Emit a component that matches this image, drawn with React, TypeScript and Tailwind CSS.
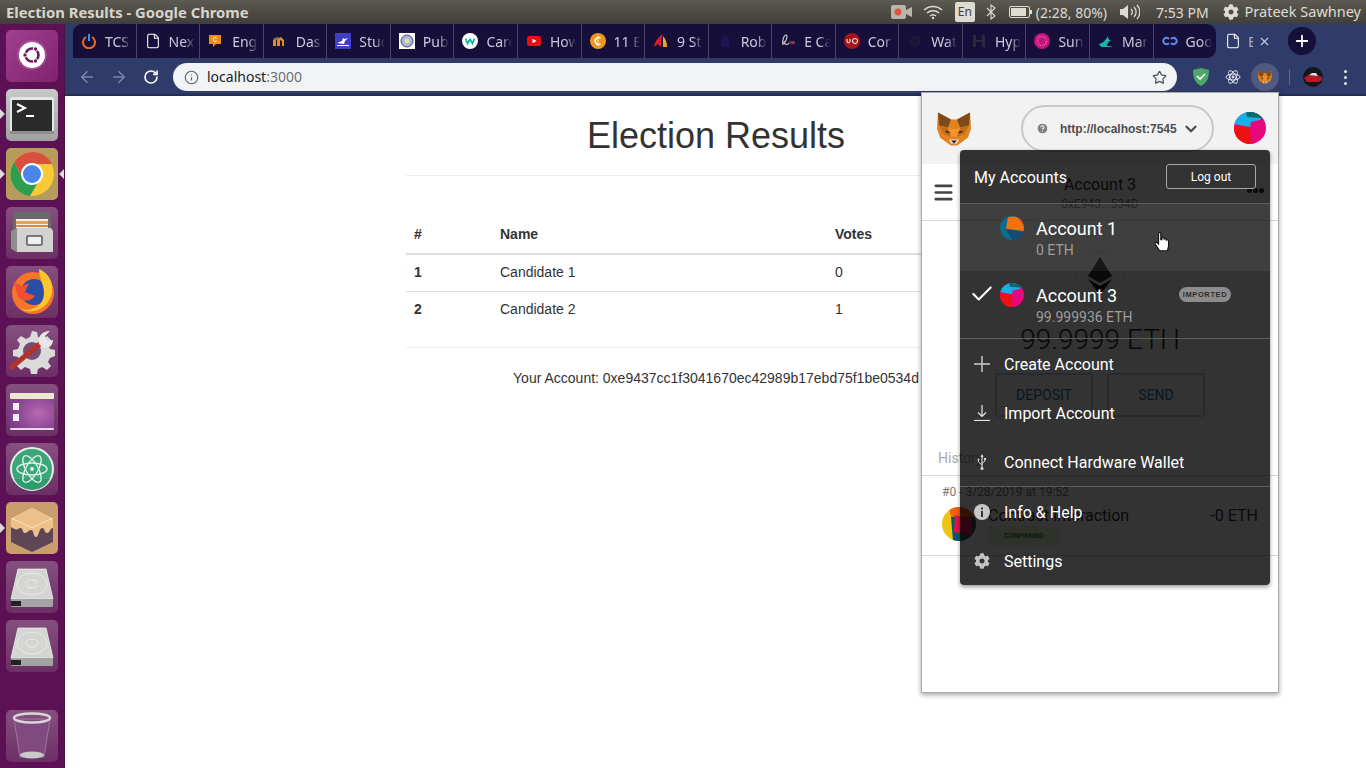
import React from 'react'
import { ArrowLeft, ArrowRight, RotateCw, Info, Star, Plus, X, File, ChevronDown, Check, Menu, CircleHelp } from 'lucide-react'
import { FaCog } from 'react-icons/fa'

const Tile = ({ bg, children }: { bg: string; children: React.ReactNode }) => (
  <div className={`w-[52px] h-[52px] rounded-[5px] shrink-0 ${bg}`}>
    <svg viewBox="0 0 52 52" width="52" height="52">{children}</svg>
  </div>
)

const purpleTile = 'bg-gradient-to-b from-[#85507f] to-[#6c2f65]'

const Disk = () => (
  <>
    <path d="M12 8h28l7 30v6a2 2 0 0 1-2 2H7a2 2 0 0 1-2-2v-6z" fill="#bdbdbd" />
    <path d="M12 8h28l7 30H5z" fill="#d4d4d2" stroke="#f2f2f2" strokeWidth="0.7" />
    <ellipse cx="26" cy="23" rx="15" ry="11" fill="none" stroke="#efefef" strokeWidth="0.8" />
    <ellipse cx="26" cy="23" rx="6" ry="4" fill="none" stroke="#f2f2f2" strokeWidth="0.8" />
    <path d="M5 38h42v6a2 2 0 0 1-2 2H7a2 2 0 0 1-2-2z" fill="#a3a3a3" />
    <rect x="5" y="40" width="10" height="5" fill="#222" />
  </>
)

const Arrow = ({ cls }: { cls: string }) => <div className={`absolute w-0 h-0 border-y-[5px] border-y-transparent ${cls}`} />

const Launcher = () => (
  <div className="relative w-[65px] shrink-0 bg-[#5c1154] border-r border-[#4a0f44] flex flex-col items-center gap-[7px] pt-[6px] pb-[6px]">
    <Tile bg="bg-gradient-to-br from-[#a0408f] to-[#80226f]">
      <circle cx="26" cy="25" r="15" fill="#b565a8" opacity="0.5" />
      <circle cx="26" cy="25" r="13" fill="#fff" />
      <circle cx="26" cy="25" r="6.500" fill="none" stroke="#6d1a60" strokeWidth="2.6" />
      <circle cx="19" cy="25" r="2.2" fill="#6d1a60" stroke="#fff" />
      <circle cx="29.500" cy="19" r="2.2" fill="#6d1a60" stroke="#fff" />
      <circle cx="29.500" cy="31" r="2.2" fill="#6d1a60" stroke="#fff" />
    </Tile>
    <Tile bg="bg-gradient-to-b from-[#c8c8c8] to-[#a2a2a2]">
      <rect x="4" y="8" width="44" height="37" rx="1.500" fill="#e6e6e6" />
      <rect x="6" y="11" width="40" height="31" fill="#2b2b2b" />
      <path d="M11 15l8 4-8 4" fill="none" stroke="#fff" strokeWidth="2" />
      <path d="M20 27h8" stroke="#fff" strokeWidth="2" />
      <rect x="4" y="42" width="44" height="3" fill="#8e8e8e" />
    </Tile>
    <Tile bg="bg-[#b59c5a]">
      <circle cx="26" cy="26" r="22" fill="#fbc935" />
      <path d="M26 16h20a22 22 0 0 0-38-2l9 17z" fill="#d9503f" />
      <path d="M8 14a22 22 0 0 0 16 34l10-17H17z" fill="#2e9d4f" />
      <circle cx="26" cy="26" r="11" fill="#fff" />
      <circle cx="26" cy="26" r="9" fill="#4a86e8" />
    </Tile>
    <Tile bg={purpleTile}>
      <path d="M9 5h34l2 8v11H7V13z" fill="#6a6a6a" />
      <path d="M10 12h32v12H10z" fill="#f4f0e6" />
      <path d="M10 14h32v3H10z" fill="#e8a05c" />
      <path d="M10 18h32v2H10z" fill="#d98a4a" />
      <path d="M11 21h34l2 3v21H11z" fill="#d2d2d2" />
      <path d="M5 24l6-3v24l-6-3z" fill="#8e8e8e" />
      <rect x="21" y="29" width="15" height="9" rx="1" fill="#f0f0f0" stroke="#555" strokeWidth="1.500" />
    </Tile>
    <Tile bg={purpleTile}>
      <circle cx="27" cy="27" r="21" fill="#f7742b" />
      <circle cx="28" cy="26" r="13" fill="#2a4ea8" />
      <path d="M33 3c14 6 17 22 9 33-6 9-19 12-28 7 13 3 24-4 24-16 0-9-5-14-5-24z" fill="#fcc72e" />
      <path d="M8 16l8 4 7-3-4 9 10 4c-4 6-12 6-17 1z" fill="#f04f32" />
    </Tile>
    <Tile bg={purpleTile}>
      <path d="M26 6l5 1 1 5 5 2 4-3 4 4-3 5 2 4 5 1v6l-5 2-2 4 3 4-4 4-5-3-4 2-1 5h-6l-1-5-5-2-4 3-4-4 3-5-2-4-5-1v-6l5-1 2-5-3-4 4-4 5 3 4-2z" fill="#dadada" />
      <circle cx="26" cy="26" r="9" fill="#7a4a74" />
      <path d="M6 42L36 17" stroke="#b3322a" strokeWidth="5" strokeLinecap="round" />
      <path d="M33 19c-2-6 2-13 11-13l-5 5 2 5 6-1c0 7-7 11-14 4z" fill="#e8e8e8" />
    </Tile>
    <Tile bg={purpleTile}>
      <defs>
        <radialGradient id="winGlow" cx="0.65" cy="0.55" r="0.6">
          <stop offset="0" stopColor="#b868b4" />
          <stop offset="1" stopColor="#7f3f8c" />
        </radialGradient>
      </defs>
      <rect x="4" y="9" width="44" height="37" rx="2" fill="url(#winGlow)" />
      <rect x="4" y="9" width="44" height="6" rx="1" fill="#ece9cf" />
      <rect x="7" y="19" width="6" height="7" fill="#f1f1f1" />
      <rect x="7" y="30" width="6" height="7" fill="#f1f1f1" />
      <rect x="4" y="44" width="44" height="2" rx="1" fill="#e8d8ea" />
    </Tile>
    <Tile bg={purpleTile}>
      <circle cx="26" cy="26" r="21" fill="#3ba67a" stroke="#e4efe9" strokeWidth="2" />
      <path d="M26 47a21 21 0 0 0 18-11H8a21 21 0 0 0 18 11z" fill="#2f9c6e" />
      <g fill="none" stroke="#dff2e8" strokeWidth="1.400">
        <ellipse cx="26" cy="26" rx="15" ry="6" />
        <ellipse cx="26" cy="26" rx="15" ry="6" transform="rotate(60 26 26)" />
        <ellipse cx="26" cy="26" rx="15" ry="6" transform="rotate(120 26 26)" />
      </g>
      <circle cx="26" cy="26" r="2" fill="#dff2e8" />
    </Tile>
    <Tile bg="bg-[#c99d6c]">
      <path d="M26 5l21 11v24L26 50 5 40V16z" fill="#5f4657" />
      <path d="M26 5l21 11v10c-3 0-3 5-6 5s-2-5-5-5-3 9-6 9-2-7-5-7-3 3-6 3-2-6-5-5-3 3-9-1V16z" fill="#edc08a" />
      <path d="M5 16l21 10 21-10" fill="none" stroke="#fbe6c9" strokeWidth="0.9" />
    </Tile>
    <Tile bg={purpleTile}><Disk /></Tile>
    <Tile bg={purpleTile}><Disk /></Tile>
    <div className="mt-auto">
      <Tile bg={purpleTile}>
        <path d="M8 9l6 38h24l6-38z" fill="#7f4a7f" stroke="#a283a4" strokeWidth="0.8" />
        <ellipse cx="26" cy="45" rx="12" ry="3.500" fill="#c9c9c9" />
        <ellipse cx="26" cy="8" rx="18" ry="4.500" fill="none" stroke="#d7d7d7" strokeWidth="2.500" />
      </Tile>
    </div>
    <Arrow cls="left-0 top-[85px] border-l-[5px] border-l-[#dcdcdc]" />
    <Arrow cls="left-0 top-[145px] border-l-[5px] border-l-[#dcdcdc]" />
    <Arrow cls="right-0 top-[145px] border-r-[5px] border-r-[#dcdcdc]" />
    <Arrow cls="left-0 top-[499px] border-l-[5px] border-l-[#dcdcdc]" />
  </div>
)

const Ico = ({ children }: { children: React.ReactNode }) => (
  <svg viewBox="0 0 16 16" width="16" height="16" className="shrink-0">{children}</svg>
)

const tabs: { title: string; icon: React.ReactNode }[] = [
  { title: 'TCS', icon: <Ico><path d="M5 4a6 6 0 1 0 6 0" fill="none" stroke="#ef6c1a" strokeWidth="2" /><path d="M8 1v7" stroke="#2196f3" strokeWidth="2" /></Ico> },
  { title: 'Next', icon: <File size={16} color="#fff" strokeWidth={1.6} className="shrink-0" /> },
  { title: 'Engl', icon: <Ico><rect x="1" y="2" width="12" height="9" fill="#f28b20" /><path d="M5 11v3l3-3z" fill="#f28b20" /><path d="M8.500 5a2 2 0 1 0 0 3" fill="none" stroke="#fff" /></Ico> },
  { title: 'Dash', icon: <Ico><path d="M1 13V7l3-2v8zM5 13V6l4-2 3 3v6h-2V8l-2-1v6z" fill="#e78b1f" /><path d="M1 6l4-2 3 1-4 2z" fill="#777" /></Ico> },
  { title: 'Stud', icon: <Ico><rect width="16" height="16" fill="#3f3fc0" /><path d="M2 10l5-2 1-3 2 1 3-1-3 3-1 3zM2 12h12v1H2z" fill="#fff" /></Ico> },
  { title: 'Publ', icon: <Ico><rect width="16" height="16" fill="#fff" /><circle cx="8" cy="8" r="6" fill="#aab4d0" stroke="#3d4f85" /><circle cx="8" cy="8" r="2.500" fill="#e7d9a8" /></Ico> },
  { title: 'Care', icon: <Ico><circle cx="8" cy="8" r="8" fill="#fff" /><path d="M3.500 5.500l2 5 2.500-4 2.500 4 2-5" fill="none" stroke="#12b5a5" strokeWidth="1.800" /></Ico> },
  { title: 'How', icon: <Ico><rect x="1" y="3" width="14" height="10" rx="2.500" fill="#e81010" /><path d="M6.500 5.800v4.400L10.500 8z" fill="#fff" /></Ico> },
  { title: '11 B', icon: <Ico><circle cx="8" cy="8" r="8" fill="#f0961e" /><path d="M10.500 5a3.500 3.500 0 1 0 0 6" fill="none" stroke="#fff" strokeWidth="1.400" /><path d="M8 3v10" stroke="#fff" strokeWidth="0.8" /></Ico> },
  { title: '9 St', icon: <Ico><path d="M1 14C2 8 6 3 10 1 8 6 8 10 8 14l-3-3z" fill="#d81f26" /><path d="M10 3c3 3 4 7 4 11h-4z" fill="#f2a71b" /></Ico> },
  { title: 'Rob', icon: <Ico><path d="M4 14V6a4 4 0 0 1 8 0v8z" fill="#1d1450" /></Ico> },
  { title: 'E Ca', icon: <Ico><path d="M3 12c-1-5 1-10 3-10s1 5-2 8c2 2 4 2 5 0" fill="none" stroke="#ccc" strokeWidth="1.200" /><rect x="9" y="8" width="6" height="3" fill="#444" /><circle cx="13" cy="10" r="1.200" fill="#d81b3c" /></Ico> },
  { title: 'Cor', icon: <Ico><circle cx="8" cy="8" r="8" fill="#a4161a" /><path d="M3 6v3a2 2 0 0 0 3 0V6" fill="none" stroke="#fff" /><circle cx="11" cy="8" r="2.500" fill="none" stroke="#fff" /></Ico> },
  { title: 'Wat', icon: <Ico><circle cx="8" cy="8" r="4" fill="#1b1330" stroke="#231a40" strokeWidth="3" strokeDasharray="2 1" /></Ico> },
  { title: 'Hyp', icon: <Ico><path d="M2 2h3v5h6V2h3v12h-3V9H5v5H2z" fill="#2a2a3a" /></Ico> },
  { title: 'Sun', icon: <Ico><circle cx="8" cy="8" r="8" fill="#c2127d" /><circle cx="8" cy="8" r="4.500" fill="none" stroke="#e85fae" strokeDasharray="1 1" strokeWidth="2" /></Ico> },
  { title: 'Man', icon: <Ico><path d="M1 11c4-1 7-4 9-8 0 3 1 4 3 5-2 0-4 2-4 5 2 0 4 0 6 1H4c-1 0-2-1-3-3z" fill="#1bb5a6" /></Ico> },
  { title: 'Goo', icon: <Ico><path d="M7 6a3.200 3.200 0 1 0 0 4M9 10a3.200 3.200 0 1 0 0-4" fill="none" stroke="#5b8de8" strokeWidth="2" /></Ico> },
]

const TabBar = () => (
  <div className="h-[34px] flex items-stretch bg-[#2f3b69] font-['Noto_Sans',sans-serif] text-[14px]">
    <div className="w-[8px] shrink-0" />
    <div className="w-[1143px] shrink-0 flex bg-[#160f3a] rounded-t-[9px] rounded-br-[9px]">
      {tabs.map((t, i) => (
        <div key={t.title} className={`flex-1 min-w-0 flex items-center gap-2 pl-2 relative ${i < tabs.length - 1 ? 'border-r border-[#4a4668]' : ''}`}>
          {t.icon}
          <span className="text-[#c9cbdc] overflow-hidden whitespace-nowrap w-[26px] [mask-image:linear-gradient(to_right,black_60%,transparent)]">{t.title}</span>
        </div>
      ))}
    </div>
    <div className="w-[64px] shrink-0 flex items-center pl-[9px]">
      <File size={16} color="#fff" strokeWidth={1.6} className="shrink-0" />
      <span className="ml-[7px] text-[#a9aec9] w-[5px] overflow-hidden">E</span>
      <X size={13} color="#c9cbdc" strokeWidth={2} className="ml-[5px] shrink-0" />
    </div>
    <div className="ml-[8px] mt-[3px] w-[28px] h-[28px] rounded-full bg-[#160f3a] flex items-center justify-center">
      <Plus size={18} color="#fff" strokeWidth={2.4} />
    </div>
  </div>
)

const Fox = ({ size }: { size: number }) => (
  <svg viewBox="0 0 34 33" width={size} height={size} className="shrink-0">
    <path d="M1 0l13 7h6L33 0l1 16-3 9-8 6-3 2h-6l-3-2-8-6-3-9z" fill="#e2811f" />
    <path d="M1 0l13 7-3 8-9-2zM33 0L20 7l3 8 9-2z" fill="#7c4a1c" />
    <path d="M2 13l9 2 3 9-7-2zM32 13l-9 2-3 9 7-2z" fill="#c46f17" />
    <path d="M11 15l6 2 6-2-3 9h-6z" fill="#ef9430" />
    <path d="M8 18l4 1 1 2-4-1zM26 18l-4 1-1 2 4-1z" fill="#3a2a20" />
    <path d="M12 27h10l-2 4h-6z" fill="#e8e0d8" />
    <path d="M14 28h6l-3 3z" fill="#2a2320" />
  </svg>
)

const Jazz3 = ({ size, id }: { size: number; id: string }) => (
  <svg viewBox="0 0 32 32" width={size} height={size} className="shrink-0">
    <clipPath id={id}><circle cx="16" cy="16" r="16" /></clipPath>
    <g clipPath={`url(#${id})`}>
      <rect width="32" height="32" fill="#e6087c" />
      <path d="M0 0h32l-6 8-9 2-1 5L0 12z" fill="#18aee8" />
      <path d="M12 0h20v9l-6-3-13-1z" fill="#0b6b6b" />
      <path d="M0 14l16 1 1 17H0z" fill="#ee1111" />
    </g>
  </svg>
)

const Jazz1 = () => (
  <svg viewBox="0 0 24 24" width="24" height="24" className="shrink-0">
    <clipPath id="j1"><circle cx="12" cy="12" r="12" /></clipPath>
    <g clipPath="url(#j1)">
      <rect width="24" height="24" fill="#0a6b8f" />
      <path d="M8 1l15-1 1 15-18-2z" fill="#f3710f" />
      <path d="M17 0h7v10z" fill="#e4312b" />
      <path d="M6 13l18 3v8H12z" fill="#164a78" />
    </g>
  </svg>
)

const Jazz0 = () => (
  <svg viewBox="0 0 34 34" width="34" height="34" className="shrink-0">
    <clipPath id="j0"><circle cx="17" cy="17" r="17" /></clipPath>
    <g clipPath="url(#j0)">
      <rect width="34" height="34" fill="#edc512" />
      <path d="M7 0h27v10L9 10z" fill="#f2600a" />
      <path d="M9 10h25v24H11z" fill="#0b5a6b" />
      <path d="M13 8l18 4-2 16-17-3z" fill="#e8124a" />
    </g>
  </svg>
)

const AccountRow = ({ name, bal, active, selected, imported, icon }: { name: string; bal: string; active?: boolean; selected?: boolean; imported?: boolean; icon: React.ReactNode }) => (
  <div className={`h-[67px] flex items-start pl-[14px] ${active ? 'bg-white/[0.06]' : ''}`}>
    <div className="w-[26px] shrink-0 pt-[10px]">{selected && <Check size={26} color="#fff" strokeWidth={2} className="-ml-[5px]" />}</div>
    <div className="w-[36px] shrink-0 pt-[12px]">{icon}</div>
    <div className="pt-[13px]">
      <div className="text-[18px] leading-[24px] text-white">{name}</div>
      <div className="text-[14px] leading-[18px] text-[#9d9d9d]">{bal}</div>
    </div>
    {imported && (
      <div className="ml-auto mr-[39px] mt-[16px] w-[52px] h-[15px] rounded-full bg-[#8c8c8c] text-[#2e2e2e] text-[7.5px] font-bold tracking-[0.6px] flex items-center justify-center font-['Liberation_Sans',sans-serif]">IMPORTED</div>
    )}
  </div>
)

const MenuItem = ({ icon, label }: { icon: React.ReactNode; label: string }) => (
  <div className="h-[49px] flex items-center pl-[14px] text-[16px] text-white">
    <div className="w-[30px] shrink-0 flex items-center">{icon}</div>
    <span className="pt-[2px]">{label}</span>
  </div>
)

const AccountMenu = () => (
  <div className="absolute left-[38px] top-[57px] w-[310px] h-[435px] bg-black/80 rounded-[4px] shadow-[0_2px_4px_rgba(0,0,0,0.4)] font-['Roboto',sans-serif]">
    <div className="h-[54px] flex items-center justify-between px-[14px] border-b border-[#5e5e5e]">
      <span className="text-[16px] text-white pt-[3px]">My Accounts</span>
      <button className="w-[90px] h-[25px] border border-[#a8a8a8] rounded-[3px] text-white text-[12px]">Log out</button>
    </div>
    <AccountRow name="Account 1" bal="0 ETH" active icon={<Jazz1 />} />
    <div className="border-b border-[#5e5e5e]">
      <AccountRow name="Account 3" bal="99.999936 ETH" selected imported icon={<Jazz3 size={24} id="j3b" />} />
    </div>
    <MenuItem label="Create Account" icon={<svg viewBox="0 0 16 16" width="16" height="16"><path d="M8 0v16M0 8h16" stroke="#cfcfcf" strokeWidth="1.4" /></svg>} />
    <MenuItem label="Import Account" icon={<svg viewBox="0 0 16 16" width="16" height="16"><path d="M8 0v11M4 7.500l4 4 4-4" fill="none" stroke="#e4e4e4" strokeWidth="1.200" /><path d="M0 15.500h16" stroke="#e4e4e4" strokeWidth="1.200" /></svg>} />
    <div className="border-b border-[#5e5e5e]">
      <MenuItem label="Connect Hardware Wallet" icon={<svg viewBox="0 0 16 16" width="16" height="16"><path d="M8 1v14" stroke="#d8d8d8" strokeWidth="1.200" /><path d="M6.500 3L8 0l1.500 3z" fill="#d8d8d8" /><circle cx="8" cy="14.500" r="1.500" fill="#d8d8d8" /><path d="M8 11L4.500 8V6M8 9.500l3-2.500V5.500" fill="none" stroke="#d8d8d8" /><circle cx="4.500" cy="5.500" r="1" fill="#d8d8d8" /><rect x="10" y="4" width="2" height="2" fill="#d8d8d8" /></svg>} />
    </div>
    <MenuItem label="Info & Help" icon={<svg viewBox="0 0 16 16" width="16" height="16"><circle cx="8" cy="8" r="8" fill="#c8c8c8" /><rect x="7" y="7" width="2" height="6" fill="#333" /><rect x="7" y="3.500" width="2" height="2" fill="#333" /></svg>} />
    <MenuItem label="Settings" icon={<FaCog size={16} color="#c4c4c4" />} />
  </div>
)

const Wallet = () => (
  <div className="absolute left-[856px] top-0 w-[358px] h-[601px] bg-white border border-[#aaa] shadow-[0_2px_5px_rgba(0,0,0,0.35)] font-['Roboto',sans-serif] text-[#333] -translate-y-[4px]">
    <div className="h-[71px] bg-[#f2f2f2] flex items-center pl-[15px] pr-[12px]">
      <Fox size={34} />
      <div className="ml-[50px] w-[193px] h-[47px] rounded-full border-2 border-[#c8c8c4] flex items-center pl-[13px] pr-[12px]">
        <CircleHelp size={13} color="#f2f2f2" fill="#7d7d7d" strokeWidth={2.2} className="shrink-0" />
        <span className="ml-[11px] text-[12px] text-[#4d4d4d] font-['Liberation_Sans',sans-serif] whitespace-nowrap font-bold">http://localhost:7545</span>
        <ChevronDown size={18} color="#4d4d4d" strokeWidth={3} className="ml-auto shrink-0" />
      </div>
      <div className="ml-auto mb-[1px]"><Jazz3 size={32} id="j3a" /></div>
    </div>
    <div className="h-[57px] border-b border-[#d8d8d8] flex items-center pl-[15px] pr-[14px] relative">
      <Menu size={23} color="#444" strokeWidth={2.8} className="-ml-[5px]" />
      <div className="absolute inset-x-0 top-[12px] text-center">
        <div className="text-[16px] leading-[18px]">Account 3</div>
        <div className="text-[12px] leading-[14px] mt-[3px] text-[#777]">0xE943...534D</div>
      </div>
      <div className="ml-auto mb-[4px] flex gap-[1px]">
        <div className="w-[5px] h-[5px] rounded-full bg-[#333]" />
        <div className="w-[5px] h-[5px] rounded-full bg-[#333]" />
        <div className="w-[5px] h-[5px] rounded-full bg-[#333]" />
      </div>
    </div>
    <div className="h-[255px] border-b border-[#d8d8d8] flex flex-col items-center pt-[30px] relative">
      <div className="w-[50px] h-[50px] rounded-full border border-[#e5e5e5] flex items-center justify-center">
        <svg viewBox="0 0 24 38" width="24" height="38"><path d="M12 0l12 19-12 7-12-7z" fill="#333" /><path d="M0 22l12 7 12-7-12 16z" fill="#111" /></svg>
      </div>
      <div className="text-[28px] leading-[36px] font-light mt-[21px] text-[#222]">99.9999 ETH</div>
      <div className="flex gap-[14px] mt-[15px]">
        <div className="w-[98px] h-[44px] border-2 border-[#c4d4e4] rounded-[2px] flex items-center justify-center text-[14px] text-[#2f6fa8]">DEPOSIT</div>
        <div className="w-[98px] h-[44px] border-2 border-[#c4d4e4] rounded-[2px] flex items-center justify-center text-[14px] text-[#2f6fa8]">SEND</div>
      </div>
      <div className="absolute left-[16px] bottom-[6px] text-[14px] text-[#aaa]">History</div>
    </div>
    <div className="h-[80px] border-b border-[#d8d8d8] pt-[9px] px-[20px]">
      <div className="text-[12px] leading-[14px] text-[#777]">#0 - 3/28/2019 at 19:52</div>
      <div className="flex mt-[8px]">
        <div className="w-[46px] shrink-0"><Jazz0 /></div>
        <div className="-mt-[1px]">
          <div className="text-[16px] leading-[20px]">Contract Interaction</div>
          <div className="w-[72px] h-[20px] rounded-[3px] bg-[#e8f7d8] text-[#4a7f2c] text-[7px] font-bold flex items-center justify-center">CONFIRMED</div>
        </div>
        <div className="ml-auto text-[16px] -mt-[1px] leading-[20px]">-0 ETH</div>
      </div>
    </div>
    <AccountMenu />
  </div>
)

const Toolbar = () => (
  <div className="h-[38px] bg-[#2f3b69] border-b-[2px] border-[#232c52] flex items-start pt-[5px] relative">
    <div className="flex items-center h-[28px]">
      <div className="w-[32px] ml-[6px] flex justify-center"><ArrowLeft size={18} color="#7e88aa" strokeWidth={2} /></div>
      <div className="w-[32px] flex justify-center"><ArrowRight size={18} color="#7e88aa" strokeWidth={2} /></div>
      <div className="w-[32px] flex justify-center"><RotateCw size={16} color="#fff" strokeWidth={2.4} /></div>
    </div>
    <div className="ml-[6px] w-[1004px] h-[28px] rounded-full bg-[#f1f3f4] flex items-center pl-[11px] pr-[10px] font-['Noto_Sans',sans-serif] text-[14px]">
      <Info size={15} color="#5f6368" strokeWidth={1.8} className="shrink-0" />
      <span className="ml-[8px] pb-[2px] text-[#202124]">localhost<span className="text-[#6b7075]">:3000</span></span>
      <Star size={15} color="#50555a" strokeWidth={2} className="ml-auto" />
    </div>
    <div className="flex items-center h-[28px] ml-[16px]">
      <svg viewBox="0 0 16 18" width="16" height="18"><path d="M8 0l8 2c0 8-2 13-8 16C2 15 0 10 0 2z" fill="#4ca869" /><path d="M4 8l3 3 5-5" fill="none" stroke="#fff" strokeWidth="1.600" /></svg>
      <svg viewBox="0 0 16 16" width="16" height="16" className="ml-[16px]"><g fill="none" stroke="#dfe3ee" strokeWidth="1"><ellipse cx="8" cy="8" rx="7" ry="3" /><ellipse cx="8" cy="8" rx="7" ry="3" transform="rotate(60 8 8)" /><ellipse cx="8" cy="8" rx="7" ry="3" transform="rotate(120 8 8)" /></g><circle cx="8" cy="8" r="1.400" fill="#dfe3ee" /></svg>
      <div className="ml-[10px] w-[28px] h-[28px] rounded-full bg-[#4f5982] flex items-center justify-center"><Fox size={14} /></div>
      <div className="ml-[10px] w-px h-[16px] bg-[#5a648c]" />
      <svg viewBox="0 0 20 20" width="20" height="20" className="ml-[13px]"><circle cx="10" cy="10" r="10" fill="#15151c" /><path d="M1 11l4-3h8l6 2v3l-3 2H4z" fill="#b31c25" /><path d="M6 8l3-2h4l2 3z" fill="#ddd" /></svg>
      <div className="ml-[21px] flex flex-col gap-[3px]">
        <div className="w-[3px] h-[3px] rounded-full bg-[#e8eaf2]" />
        <div className="w-[3px] h-[3px] rounded-full bg-[#e8eaf2]" />
        <div className="w-[3px] h-[3px] rounded-full bg-[#e8eaf2]" />
      </div>
    </div>
  </div>
)

const TopBar = () => (
  <div className="h-[24px] shrink-0 bg-gradient-to-b from-[#5c5a51] to-[#3f3e39] flex items-center font-['Noto_Sans',sans-serif] text-[14px] text-[#dfdbd2] pl-[6px] pr-[5px]">
    <span className="font-bold text-[14.8px] text-[#d8d4ca]">Election Results - Google Chrome</span>
    <div className="ml-auto flex items-center">
      <svg viewBox="0 0 22 16" width="22" height="16"><rect width="15" height="14" y="1" rx="2" fill="#b9b5ad" /><circle cx="7" cy="8" r="3.500" fill="#e0533d" /><path d="M15 6l6-3v10l-6-3z" fill="#b9b5ad" /></svg>
      <svg viewBox="0 0 20 16" width="20" height="16" className="ml-[10px]"><g fill="none" stroke="#dfdbd2" strokeWidth="1.500"><path d="M1 6a13 13 0 0 1 18 0" /><path d="M4 9a9 9 0 0 1 12 0" /><path d="M7 12a4.500 4.500 0 0 1 6 0" /></g><circle cx="10" cy="14" r="1.200" fill="#dfdbd2" /></svg>
      <div className="ml-[12px] w-[20px] h-[20px] rounded-[2px] bg-[#dfdbd2] text-[#3f3e39] text-[12px] flex items-center justify-center">En</div>
      <svg viewBox="0 0 10 16" width="10" height="16" className="ml-[11px]"><path d="M1 4l8 8-4 3V1l4 3-8 8" fill="none" stroke="#dfdbd2" strokeWidth="1.100" /></svg>
      <svg viewBox="0 0 24 12" width="24" height="12" className="ml-[13px]"><rect x="0.5" y="0.5" width="20" height="11" rx="1.500" fill="none" stroke="#dfdbd2" /><rect x="2" y="2" width="15" height="8" fill="#dfdbd2" /><rect x="21" y="4" width="2" height="4" fill="#dfdbd2" /></svg>
      <span className="ml-[3px]">(2:28, 80%)</span>
      <svg viewBox="0 0 20 16" width="20" height="16" className="ml-[13px]"><path d="M0 5h3l5-4v14l-5-4H0z" fill="#dfdbd2" /><g fill="none" stroke="#dfdbd2" strokeWidth="1.300"><path d="M11 5a4 4 0 0 1 0 6" /><path d="M14 3a7 7 0 0 1 0 10" /><path d="M17 1a10 10 0 0 1 0 14" /></g></svg>
      <span className="ml-[16px]">7:53 PM</span>
      <FaCog size={16} color="#dfdbd2" className="ml-[14px]" />
      <span className="ml-[6px] text-[14.500px]">Prateek Sawhney</span>
    </div>
  </div>
)

const Page = () => (
  <div className="flex-1 relative bg-white font-['Liberation_Sans',sans-serif] text-[14px] text-[#333]">
    <div className="w-[620px] ml-[341px]">
      <h1 className="text-[36px] leading-[40px] font-normal text-center pt-[20px] pb-[19px] border-b border-[#eee]">Election Results</h1>
      <table className="w-full mt-[40px] border-collapse table-fixed">
        <thead>
          <tr className="border-b-2 border-[#ddd] font-bold text-left">
            <th className="w-[86px] p-2 h-[37px]">#</th>
            <th className="w-[335px] p-2">Name</th>
            <th className="p-2">Votes</th>
          </tr>
        </thead>
        <tbody>
          <tr className="border-b border-[#ddd] h-[37px]">
            <td className="px-2 font-bold">1</td>
            <td className="px-2">Candidate 1</td>
            <td className="px-2">0</td>
          </tr>
          <tr className="h-[37px]">
            <td className="px-2 font-bold">2</td>
            <td className="px-2">Candidate 2</td>
            <td className="px-2">1</td>
          </tr>
        </tbody>
      </table>
      <div className="mt-[19px] border-t border-[#eee] pt-[20px] text-center leading-[20px]">Your Account: 0xe9437cc1f3041670ec42989b17ebd75f1be0534d</div>
    </div>
    <Wallet />
    <svg viewBox="0 0 18 20" width="20" height="22" className="absolute left-[1088px] top-[136px]">
      <path d="M5 1a1.200 1.200 0 0 1 2 0v6l1 0V6a1 1 0 0 1 2 0v1a1 1 0 0 1 2 0v1a1 1 0 0 1 2 0v5l-1 4H6l-4-6c-1-2 1-2 2-1l1 1z" fill="#fff" stroke="#111" strokeWidth="1" />
    </svg>
  </div>
)

export default function App() {
  return (
    <div className="h-screen w-full overflow-hidden flex flex-col">
      <TopBar />
      <div className="flex-1 flex min-h-0">
        <Launcher />
        <div className="flex-1 min-w-0 flex flex-col">
          <TabBar />
          <Toolbar />
          <Page />
        </div>
      </div>
    </div>
  )
}
